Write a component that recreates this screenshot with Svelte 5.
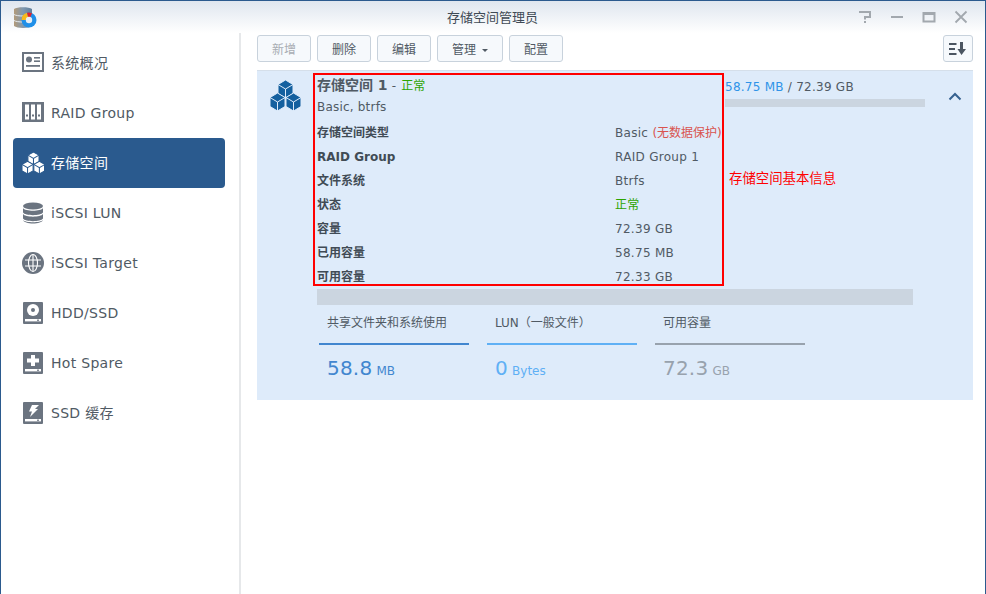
<script>
    const navItems = [
        { label: '系统概况', icon: 'overview' },
        { label: 'RAID Group', icon: 'raid' },
        { label: '存储空间', icon: 'cubes', active: true },
        { label: 'iSCSI LUN', icon: 'lun' },
        { label: 'iSCSI Target', icon: 'globe' },
        { label: 'HDD/SSD', icon: 'hdd' },
        { label: 'Hot Spare', icon: 'spare' },
        { label: 'SSD 缓存', icon: 'cache' }
    ];

    const buttons = [
        { label: '新增', disabled: true },
        { label: '删除' },
        { label: '编辑' },
        { label: '管理', caret: true },
        { label: '配置' }
    ];

    const rows = [
        ['存储空间类型', 'Basic'],
        ['RAID Group', 'RAID Group 1'],
        ['文件系统', 'Btrfs'],
        ['状态', '正常'],
        ['容量', '72.39 GB'],
        ['已用容量', '58.75 MB'],
        ['可用容量', '72.33 GB']
    ];

    const stats = [
        { label: '共享文件夹和系统使用', value: '58.8', unit: 'MB', color: '#4186cf' },
        { label: 'LUN（一般文件）', value: '0', unit: 'Bytes', color: '#5fb0f5' },
        { label: '可用容量', value: '72.3', unit: 'GB', color: '#98a2ad' }
    ];

    const cubeCenters = [[15.5, 0], [7.5, 13], [23.5, 13]];
</script>

{#snippet cubes(fill, line, width)}
    {#each cubeCenters as [x, y]}
        <g transform="translate({x} {y})">
            <path d="M0 0 7.5 4.5V13.5L0 18-7.5 13.5V4.5Z" fill={fill} stroke={line} stroke-width={width} />
            <path d="M-7.5 4.5 0 9 7.5 4.5M0 9V18" fill="none" stroke={line} stroke-width={width} />
        </g>
    {/each}
{/snippet}

{#snippet navIcon(name)}
    <svg class="nav-icon" viewBox="0 0 22 22" width="22" height="22">
        {#if name === 'overview'}
            <rect x="0" y="0" width="22" height="20" fill="#6b7480" />
            <rect x="2" y="2" width="18" height="16" fill="#fff" />
            <circle cx="7" cy="7.5" r="3" fill="#6b7480" />
            <rect x="12" y="5" width="6" height="1.6" fill="#6b7480" />
            <rect x="12" y="8.4" width="6" height="1.6" fill="#6b7480" />
            <rect x="4" y="13" width="14" height="1.8" fill="#6b7480" />
        {:else if name === 'raid'}
            <rect x="0" y="0" width="22" height="20" fill="#6b7480" />
            <rect x="3" y="2.5" width="4" height="15" fill="#fff" />
            <rect x="9" y="2.5" width="4" height="15" fill="#fff" />
            <rect x="15" y="2.5" width="4" height="15" fill="#fff" />
            <rect x="4" y="12.5" width="2" height="2" fill="#6b7480" />
            <rect x="10" y="12.5" width="2" height="2" fill="#6b7480" />
            <rect x="16" y="12.5" width="2" height="2" fill="#6b7480" />
        {:else if name === 'cubes'}
            <g transform="scale(0.74 0.71)">{@render cubes('#fff', '#2a5a8e', 1.4)}</g>
        {:else if name === 'lun'}
            <g fill="#6b7480">
                <ellipse cx="11" cy="4" rx="10" ry="3.6" />
                <path d="M1 6C3 9.6 19 9.6 21 6V10.5C19 14 3 14 1 10.5Z" />
                <path d="M1 12C3 15.5 19 15.5 21 12V16.5C19 20 3 20 1 16.5Z" />
                <path d="M1 18C3 21 19 21 21 18C20 22.6 2 22.6 1 18Z" />
            </g>
        {:else if name === 'globe'}
            <circle cx="11" cy="11" r="11" fill="#6b7480" />
            <g fill="none" stroke="#fff" stroke-width="1.1">
                <ellipse cx="11" cy="11" rx="4.5" ry="8.5" />
                <path d="M11 2.5V19.5M3 8H19M3 14H19" />
            </g>
        {:else}
            <rect x="1" y="0" width="20" height="22" rx="1" fill="#6b7480" />
            <rect x="3" y="17" width="16" height="2.4" fill="#fff" />
            <rect x="15" y="17.6" width="2" height="1.2" fill="#6b7480" />
            {#if name === 'hdd'}
                <circle cx="11" cy="8" r="6" fill="#fff" />
                <circle cx="11" cy="8" r="2" fill="#6b7480" />
            {:else if name === 'spare'}
                <path d="M9 3H13V6.5H17V10.5H13V14H9V10.5H5V6.5H9Z" fill="#fff" />
            {:else}
                <path d="M10 3H17L13 7H16L8 15 10 9.5H7Z" fill="#fff" />
            {/if}
        {/if}
    </svg>
{/snippet}

<div class="window">
    <header class="titlebar">
        <svg class="app-logo" viewBox="0 0 24 22" width="24" height="22">
            <defs>
                <linearGradient id="can" x1="0" x2="1" y1="0" y2="0">
                    <stop offset="0" stop-color="#b39a78" />
                    <stop offset="0.5" stop-color="#7f98b0" />
                    <stop offset="1" stop-color="#5f7f9c" />
                </linearGradient>
            </defs>
            <path d="M0 2C3-0.5 15-0.5 18 2V19C15 21.5 3 21.5 0 19Z" fill="url(#can)" />
            <path d="M0 7.5C3 9.5 15 9.5 18 7.5M0 13.5C3 15.5 15 15.5 18 13.5" fill="none" stroke="#e4eaf0" stroke-width="1" />
            <circle cx="15" cy="13" r="7.5" fill="#1f8fe8" />
            <path d="M15 13 7.5 13A7.5 7.5 0 0 1 13 5.8Z" fill="#f6b91c" />
            <path d="M13 5.8A7.5 7.5 0 0 1 18 6.2L15 13Z" fill="#e2232a" />
            <circle cx="15" cy="13" r="3.2" fill="#e8eef4" />
        </svg>
        <span class="title">存储空间管理员</span>
        <div class="win-controls">
            <svg viewBox="0 0 14 14" width="14" height="14">
                <path d="M2 3V2H12V7H7V9.5" fill="none" stroke="#a2a8ae" stroke-width="2" />
                <rect x="6" y="11" width="2" height="2" fill="#a2a8ae" />
            </svg>
            <svg viewBox="0 0 14 14" width="14" height="14"><rect x="1" y="6" width="12" height="2" fill="#a2a8ae" /></svg>
            <svg viewBox="0 0 14 14" width="14" height="14"><path d="M1.5 3H12.5V11.5H1.5Z" fill="none" stroke="#a2a8ae" stroke-width="2" /><rect x="1" y="2" width="12" height="3" fill="#a2a8ae" /></svg>
            <svg viewBox="0 0 14 14" width="14" height="14"><path d="M1.5 1.5 12.5 12.5M12.5 1.5 1.5 12.5" stroke="#a2a8ae" stroke-width="1.8" /></svg>
        </div>
    </header>

    <div class="body">
        <nav class="sidebar">
            {#each navItems as item}
                <div class="nav-item" class:active={item.active}>
                    <span class="icon-slot">{@render navIcon(item.icon)}</span>
                    <span>{item.label}</span>
                </div>
            {/each}
        </nav>

        <main class="content">
            <div class="toolbar">
                {#each buttons as btn}
                    <button class="btn" disabled={btn.disabled}>
                        {btn.label}{#if btn.caret}<i class="caret"></i>{/if}
                    </button>
                {/each}
                <button class="btn sort" aria-label="排序">
                    <svg viewBox="0 0 18 14" width="18" height="14">
                        <g fill="#4b5561">
                            <rect x="0" y="1" width="7.5" height="2" />
                            <rect x="0" y="6" width="6" height="2" />
                            <rect x="0" y="11" width="7.5" height="2" />
                            <path d="M11 0H14V7H17L12.5 13 8.5 7H11Z" />
                        </g>
                    </svg>
                </button>
            </div>

            <section class="panel">
                <div class="summary">
                    <svg class="panel-icon" viewBox="0 0 31 31" width="31" height="31">
                        {@render cubes('#14609f', '#deebfa', 1)}
                    </svg>

                    <div class="detail">
                        <div class="volume-title">
                            <strong>存储空间 1</strong> <span class="dash">-</span> <span class="ok status">正常</span>
                        </div>
                        <div class="volume-sub">Basic, btrfs</div>
                        <div class="rows">
                            {#each rows as [name, value]}
                                <div class="row">
                                    <b>{name}</b>
                                    <span class="val" class:ok={value === '正常'}>
                                        {value}
                                        {#if value === 'Basic'}<span class="warn">(无数据保护)</span>{/if}
                                    </span>
                                </div>
                            {/each}
                        </div>
                    </div>

                    <div class="usage">
                        <div class="usage-text"><span class="used">58.75 MB</span> / 72.39 GB</div>
                        <div class="usage-bar"></div>
                    </div>

                    <svg class="chevron" viewBox="0 0 14 9" width="14" height="9">
                        <path d="M1.5 7.5 7 2 12.5 7.5" fill="none" stroke="#35618f" stroke-width="2" />
                    </svg>
                </div>

                <div class="big-bar"></div>

                <div class="stats">
                    {#each stats as s}
                        <div class="stat">
                            <div class="stat-label" style="border-color: {s.color}">{s.label}</div>
                            <div class="stat-value" style="color: {s.color}">
                                <span class="num">{s.value}</span> <span class="unit">{s.unit}</span>
                            </div>
                        </div>
                    {/each}
                </div>

                <div class="note-box"></div>
                <div class="note">存储空间基本信息</div>
            </section>
        </main>
    </div>
</div>

<style>
    :global(body) {
        margin: 0;
        background: #fff;
    }

    .window {
        box-sizing: border-box;
        width: 986px;
        height: 594px;
        overflow: hidden;
        border: 1px solid #2b5a8e;
        border-bottom: none;
        display: flex;
        flex-direction: column;
        font-family: "DejaVu Sans", "Noto Sans CJK SC", sans-serif;
        font-size: 13px;
        color: #505a64;
        background: #fff;
    }

    /* ---- Title bar ---- */
    .titlebar {
        position: relative;
        height: 32px;
        flex: none;
        display: flex;
        align-items: center;
        padding: 0 17px 0 13px;
        background: linear-gradient(#dfe6ef, #fff);
    }

    .app-logo {
        margin-top: 1px;
    }

    .title {
        position: absolute;
        left: -1px;
        right: 0;
        top: 8px;
        text-align: center;
        font-size: 13px;
        line-height: 18px;
        color: #3f4a55;
    }

    .win-controls {
        margin-left: auto;
        display: flex;
        align-items: center;
        gap: 18px;
    }

    .body {
        flex: 1;
        display: flex;
        min-height: 0;
    }

    /* ---- Sidebar ---- */
    .sidebar {
        box-sizing: border-box;
        width: 240px;
        flex: none;
        padding: 5px 14px 0 12px;
        border-right: 2px solid #e6e8ea;
    }

    .nav-item {
        height: 50px;
        display: flex;
        align-items: center;
        border-radius: 4px;
        font-size: 14px;
        line-height: 50px;
        letter-spacing: 0.3px;
        color: #505a64;
    }

    .nav-item.active {
        background: #2a5a8e;
        color: #fff;
    }

    .icon-slot {
        box-sizing: border-box;
        width: 38px;
        padding-left: 9px;
        display: flex;
        flex: none;
    }

    /* ---- Toolbar ---- */
    .content {
        flex: 1;
        min-width: 0;
        padding: 2px 12px 0 16px;
    }

    .toolbar {
        display: flex;
        gap: 6px;
        height: 27px;
        margin-bottom: 8px;
    }

    .btn {
        box-sizing: border-box;
        height: 27px;
        padding: 0 14px;
        border: 1px solid #c8d2dc;
        border-radius: 3px;
        background: #f6f9fc;
        font: inherit;
        font-size: 12px;
        color: #505a64;
    }

    .btn:disabled {
        color: #a8adb3;
    }

    .caret {
        display: inline-block;
        margin-left: 6px;
        vertical-align: 2px;
        border: 3px solid transparent;
        border-top: 3px solid #505a64;
        border-bottom: none;
    }

    .sort {
        margin-left: auto;
        width: 30px;
        padding: 0;
        display: flex;
        align-items: center;
        justify-content: center;
    }

    /* ---- Volume panel ---- */
    .panel {
        position: relative;
        box-sizing: border-box;
        height: 330px;
        background: #deebfa;
        border-top: 1px solid #d5dfea;
    }

    .summary {
        display: flex;
        align-items: flex-start;
    }

    .panel-icon {
        flex: none;
        margin: 9px 0 0 13px;
    }

    .detail {
        width: 408px;
        flex: none;
        margin-left: 16px;
        padding-top: 6px;
    }

    .volume-title {
        height: 17px;
        line-height: 17px;
    }

    .volume-title strong {
        font-size: 14px;
        font-weight: 700;
        color: #505a64;
    }

    .dash {
        font-size: 12px;
    }

    .ok {
        color: #2ca400;
        font-size: 12px;
        letter-spacing: 0;
    }

    .status {
        margin-left: 1px;
    }

    .volume-sub {
        margin-top: 4px;
        height: 19px;
        line-height: 19px;
        font-size: 12px;
        letter-spacing: 0.2px;
    }

    .rows {
        margin-top: 4px;
    }

    .row {
        height: 24px;
        display: flex;
        line-height: 24px;
        font-size: 12px;
    }

    .row b {
        width: 298px;
        flex: none;
        color: #414b55;
    }

    .val {
        letter-spacing: 0.3px;
    }

    .warn {
        color: #d9534f;
        letter-spacing: 0;
    }

    .usage {
        width: 200px;
        flex: none;
        padding-top: 8px;
    }

    .usage-text {
        height: 17px;
        line-height: 17px;
        font-size: 12px;
        letter-spacing: 0.25px;
    }

    .used {
        color: #2f93e8;
    }

    .usage-bar {
        margin-top: 3px;
        height: 8px;
        background: #cbd5e0;
    }

    .chevron {
        margin: 21px 0 0 23px;
    }

    .big-bar {
        margin: 0 60px;
        height: 16px;
        background: #cbd5e0;
    }

    .stats {
        display: flex;
        gap: 18px;
        padding-left: 62px;
    }

    .stat {
        width: 150px;
    }

    .stat-label {
        box-sizing: border-box;
        height: 40px;
        padding: 9px 0 0 8px;
        border-bottom: 2px solid;
        font-size: 12px;
        line-height: 18px;
    }

    .stat-value {
        padding: 10px 0 0 8px;
        line-height: 26px;
    }

    .num {
        font-size: 20px;
        letter-spacing: 0.2px;
    }

    .unit {
        font-size: 12px;
    }

    /* annotation drawn over the screenshot */
    .note-box {
        position: absolute;
        left: 56px;
        top: 2px;
        width: 411px;
        height: 213px;
        box-sizing: border-box;
        border: 2px solid #f00;
    }

    .note {
        position: absolute;
        left: 472px;
        top: 96px;
        font-size: 13.4px;
        color: #f00;
    }
</style>
